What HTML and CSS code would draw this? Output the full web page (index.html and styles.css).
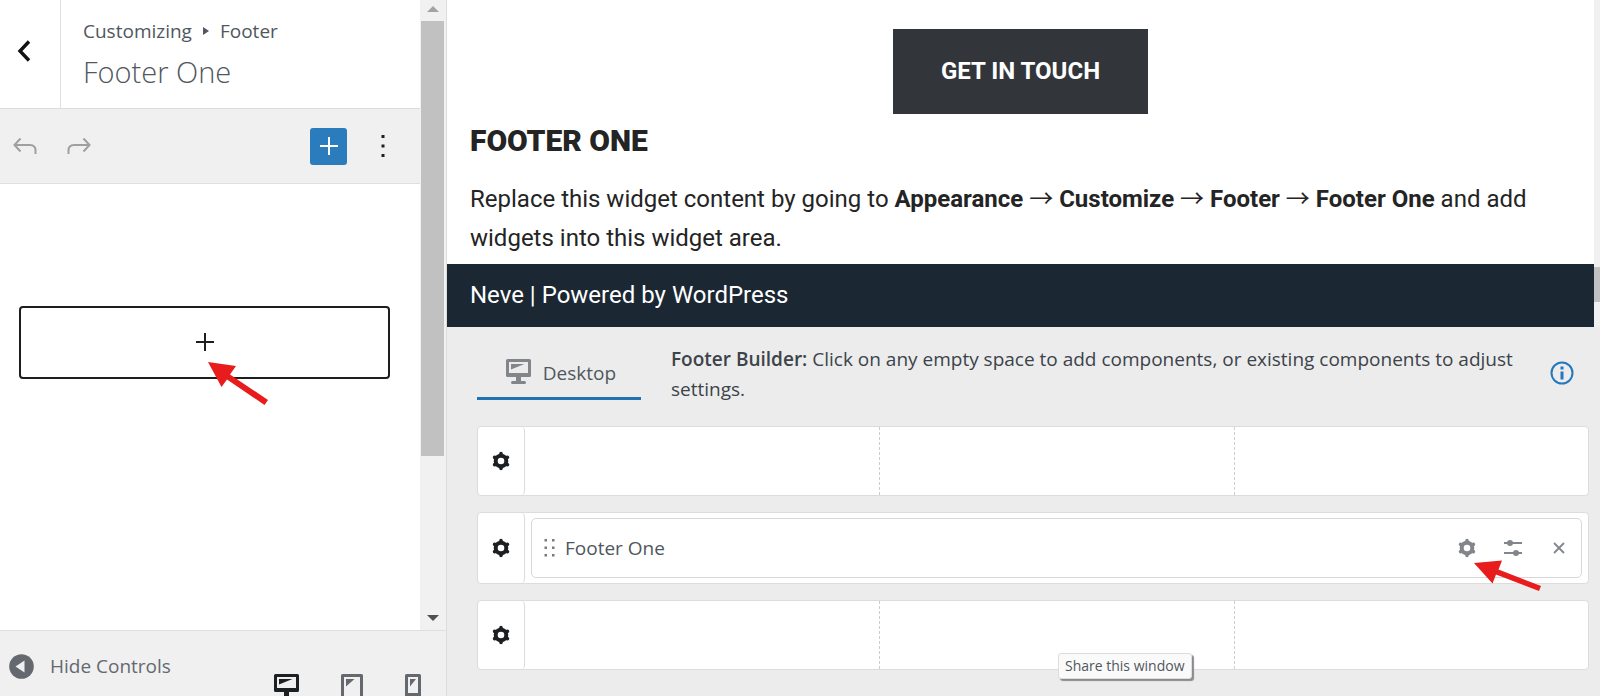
FILE: index.html
```html
<!DOCTYPE html>
<html lang="en">
<head>
<meta charset="utf-8">
<title>Customizing: Footer One</title>
<link rel="stylesheet" href="styles.css">
</head>
<body>
<svg class="defs" aria-hidden="true">
  <symbol id="gear" viewBox="0 0 20 20">
    <g stroke="currentColor" stroke-linecap="round" fill="none">
      <circle cx="10" cy="10" r="5.3" stroke-width="4"/>
      <path stroke-width="3.6" d="M10 4V2.600M10 16v1.400M4.900 7L3.600 6.300M15.100 13l1.300.7M15.100 7l1.300-.7M4.900 13l-1.300.7"/>
    </g>
  </symbol>
  <symbol id="desktop" viewBox="0 0 25 25">
    <path fill="currentColor" fill-rule="evenodd" d="M1.500 0h22A1.500 1.500 0 0 1 25 1.500v15a1.500 1.500 0 0 1-1.500 1.500H15v4h3.500a1.500 1.500 0 0 1 0 3h-12a1.500 1.500 0 0 1 0-3H10v-4H1.500A1.500 1.500 0 0 1 0 16.500v-15A1.500 1.500 0 0 1 1.500 0zM3 3v11h19V3zM5 5h13.500L5 10.500z"/>
  </symbol>
</svg>

<div class="customizer">
  <aside class="sidebar">
    <div class="sidebar-main">
      <div class="panel">
        <header class="panel-header">
          <button class="back" aria-label="Back">
            <svg width="14" height="22" viewBox="0 0 14 22"><path d="M12 1.500L3 11l9 9.500" fill="none" stroke="currentColor" stroke-width="3.400"/></svg>
          </button>
          <div class="titles">
            <p class="crumbs">Customizing <svg class="crumb-mark" width="6" height="8" viewBox="0 0 6 8"><path d="M0 0l6 4-6 4z" fill="currentColor"/></svg> Footer</p>
            <h1 class="title">Footer One</h1>
          </div>
        </header>
        <div class="toolbar">
          <button class="tool" aria-label="Undo">
            <svg width="24" height="18" viewBox="0 0 24 18"><path d="M7.500 1.500L1.500 8l6 6.500M1.500 8H17q5.500 0 5.500 5.500V17" fill="none" stroke="currentColor" stroke-width="2"/></svg>
          </button>
          <button class="tool" aria-label="Redo">
            <svg width="24" height="18" viewBox="0 0 24 18"><path d="M16.500 1.500l6 6.500-6 6.500M22.500 8H7Q1.500 8 1.500 13.500V17" fill="none" stroke="currentColor" stroke-width="2"/></svg>
          </button>
          <button class="inserter" aria-label="Add block">
            <svg width="18" height="18" viewBox="0 0 18 18"><path d="M9 0v18M0 9h18" stroke="currentColor" stroke-width="2"/></svg>
          </button>
          <button class="more" aria-label="More options">
            <svg width="4" height="22" viewBox="0 0 4 22"><path d="M.5 0h3v3h-3zM.5 9.500h3v3h-3zM.5 19h3v3h-3z" fill="currentColor"/></svg>
          </button>
        </div>
        <div class="widgets">
          <button class="appender" aria-label="Add block">
            <svg width="18" height="18" viewBox="0 0 18 18"><path d="M9 0v18M0 9h18" stroke="currentColor" stroke-width="2"/></svg>
          </button>
          <svg class="pointer pointer-appender" width="62" height="46" viewBox="0 0 62 46"><path d="M1 1l28 4-6 8.500L61 39l-3.500 5-37.500-25.500L14.500 26z" fill="#e81c1c"/></svg>
        </div>
      </div>
      <div class="scrollbar">
        <svg class="scroll-up" width="12" height="6" viewBox="0 0 12 6"><path d="M0 6l6-6 6 6z" fill="currentColor"/></svg>
        <div class="track"><div class="thumb"></div></div>
        <svg class="scroll-down" width="12" height="6" viewBox="0 0 12 6"><path d="M0 0h12L6 6z" fill="currentColor"/></svg>
      </div>
    </div>
    <footer class="sidebar-footer">
      <button class="collapse">
        <svg width="25" height="25" viewBox="0 0 25 25"><circle cx="12.500" cy="12.500" r="12.300" fill="currentColor"/><path d="M15.500 6.500v12l-9-6z" fill="#f0f0f0"/></svg>
        <span>Hide Controls</span>
      </button>
      <div class="devices">
        <button class="device device-active" aria-label="Desktop"><svg width="25" height="25"><use href="#desktop"/></svg></button>
        <button class="device" aria-label="Tablet"><svg width="22" height="25" viewBox="0 0 22 25"><path fill="currentColor" fill-rule="evenodd" d="M1.500 0h19A1.500 1.500 0 0 1 22 1.500V25H0V1.500A1.500 1.500 0 0 1 1.500 0zM3 3v19h16V3zM5 5h8.500L5 12.500z"/></svg></button>
        <button class="device" aria-label="Mobile"><svg width="16" height="25" viewBox="0 0 16 25"><path fill="currentColor" fill-rule="evenodd" d="M1.500 0h13A1.500 1.500 0 0 1 16 1.500V25H0V1.500A1.500 1.500 0 0 1 1.500 0zM3 3v16h10V3zM5 5h6l-6 7.500z"/></svg></button>
      </div>
    </footer>
  </aside>

  <main class="main">
    <div class="preview">
      <div class="site">
        <div class="content">
          <a class="cta" href="#">GET IN TOUCH</a>
          <h2 class="widget-title">FOOTER ONE</h2>
          <p class="widget-text">Replace this widget content by going to <strong>Appearance</strong> <span class="arrow">→</span> <strong>Customize</strong> <span class="arrow">→</span> <strong>Footer</strong> <span class="arrow">→</span> <strong>Footer One</strong> and add widgets into this widget area.</p>
        </div>
        <div class="credits">Neve | Powered by WordPress</div>
      </div>
      <div class="site-scroll"><div class="site-thumb"></div></div>
    </div>

    <section class="builder">
      <div class="builder-head">
        <button class="tab"><svg class="tab-icon" width="25" height="25"><use href="#desktop"/></svg><span class="tab-label">Desktop</span></button>
        <p class="hint"><strong>Footer Builder:</strong> Click on any empty space to add components, or existing components to adjust settings.</p>
        <button class="info" aria-label="Information">
          <svg width="24" height="24" viewBox="0 0 24 24"><circle cx="12" cy="12" r="10.500" fill="none" stroke="currentColor" stroke-width="2"/><path d="M10.500 5.500h3v3h-3zM10.500 10.500h3v8h-3z" fill="currentColor"/></svg>
        </button>
      </div>
      <div class="rows">
        <div class="row">
          <button class="row-settings" aria-label="Top row settings"><svg width="20" height="20"><use href="#gear"/></svg></button>
          <div class="cells"><div class="cell"></div><div class="cell"></div><div class="cell"></div></div>
        </div>
        <div class="row">
          <button class="row-settings" aria-label="Main row settings"><svg width="20" height="20"><use href="#gear"/></svg></button>
          <div class="slot">
            <div class="item">
              <svg class="grip" width="12" height="20" viewBox="0 0 12 20"><path d="M.5 1H3v2.500H.5zM8 1h2.500v2.500H8zM.5 8.500H3V11H.5zM8 8.500h2.500V11H8zM.5 16H3v2.500H.5zM8 16h2.500v2.500H8z" fill="currentColor"/></svg>
              <span class="item-name">Footer One</span>
              <div class="actions">
                <button class="action" aria-label="Settings"><svg width="20" height="20"><use href="#gear"/></svg></button>
                <button class="action" aria-label="Options"><svg width="20" height="20" viewBox="0 0 20 20"><path d="M1 5h18M1 15h18" stroke="currentColor" stroke-width="2"/><circle cx="7" cy="5" r="3" fill="currentColor"/><circle cx="13" cy="15" r="3" fill="currentColor"/></svg></button>
                <button class="action" aria-label="Remove"><svg width="20" height="20" viewBox="0 0 20 20"><path d="M5 5l10 10M15 5L5 15" stroke="currentColor" stroke-width="1.800"/></svg></button>
              </div>
              <svg class="pointer pointer-settings" width="70" height="34" viewBox="0 0 70 34"><path d="M1 4l28-2.500-3.500 9L68 27l-2 5-43-16.500-3.500 9z" fill="#e81c1c"/></svg>
            </div>
          </div>
        </div>
        <div class="row">
          <button class="row-settings" aria-label="Bottom row settings"><svg width="20" height="20"><use href="#gear"/></svg></button>
          <div class="cells"><div class="cell"></div><div class="cell"></div><div class="cell"></div></div>
        </div>
      </div>
      <div class="tooltip" role="tooltip">Share this window</div>
    </section>
  </main>
</div>
</body>
</html>
```
FILE: styles.css
```css
* { box-sizing: border-box; }
body {
  margin: 0;
  font-family: "Open Sans", "Noto Sans", sans-serif;
  font-size: 19px;
  color: #50575e;
  background: #ececec;
}
h1, h2, p { margin: 0; }
svg { display: block; flex: none; }
button {
  display: flex;
  align-items: center;
  justify-content: center;
  margin: 0;
  padding: 0;
  border: 0;
  background: none;
  color: inherit;
  font: inherit;
  cursor: pointer;
}
.defs { position: absolute; width: 0; height: 0; }
.customizer { display: flex; height: 100vh; overflow: hidden; }

/* Sidebar */
.sidebar {
  flex: 0 0 447px;
  display: flex;
  flex-direction: column;
  background: #f0f0f0;
  border-right: 1px solid #dcdcdc;
}
.sidebar-main { flex: 1; display: flex; min-height: 0; }
.panel { flex: 1; display: flex; flex-direction: column; background: #fff; }
.panel-header { display: flex; border-bottom: 1px solid #dcdcdc; }
.back { width: 61px; padding: 0 12px 6px 0; border-right: 1px solid #e0e0e0; color: #111; }
.titles { padding: 16px 22px 14px; }
.crumbs { display: flex; align-items: center; gap: 11px; line-height: 30px; }
.title { padding-top: 4px; font-size: 29px; font-weight: 300; line-height: 44px; }
.toolbar {
  display: flex;
  align-items: center;
  gap: 30px;
  height: 75px;
  padding: 0 35px 0 13px;
  background: #f0f0f0;
  border-bottom: 1px solid #dfdfdf;
}
.tool { color: #a0a0a2; }
.inserter { width: 37px; height: 37px; margin-left: auto; border-radius: 3px; background: #2a7cbd; color: #fff; }
.more { margin-left: 4px; color: #1e1e1e; }
.widgets { position: relative; padding: 122px 30px 0 19px; }
.appender { width: 100%; height: 73px; padding-bottom: 2px; border: 2px solid #1e1e1e; border-radius: 4px; color: #1e1e1e; }
.pointer { position: absolute; }
.pointer-appender { left: 207px; top: 177px; }
.scrollbar {
  width: 26px;
  display: flex;
  flex-direction: column;
  align-items: center;
  padding: 6px 2px 9px 1px;
  background: #f1f1f1;
}
.scroll-up { color: #a3a3a3; }
.scroll-down { color: #505050; }
.track { flex: 1; align-self: stretch; padding: 9px 0 6px; }
.thumb { height: 74%; background: #c1c1c1; }
.sidebar-footer {
  display: flex;
  justify-content: space-between;
  height: 66px;
  padding: 0 25px 0 9px;
  border-top: 1px solid #dfdfdf;
  overflow: hidden;
}
.collapse { gap: 16px; align-self: flex-start; height: 70px; color: #646970; }
.devices { display: flex; align-items: flex-start; gap: 42px; padding-top: 43px; }
.device { color: #646970; }
.device-active { color: #1d2023; }

/* Site preview */
.main { flex: 1; display: flex; flex-direction: column; min-width: 0; }
.preview { display: flex; }
.site { flex: 1; background: #fff; color: #242424; font-family: Roboto, "Liberation Sans", sans-serif; font-size: 24px; }
.content { display: flex; flex-direction: column; padding: 29px 23px 6px; }
.cta {
  align-self: center;
  padding: 23px 48px;
  background: #32363b;
  color: #fff;
  font-weight: 700;
  line-height: 39px;
  text-decoration: none;
}
.widget-title { margin-bottom: 12px; font-size: 30px; font-weight: 900; line-height: 54px; }
.widget-text { line-height: 39px; }
.arrow { font-family: "Noto Sans CJK JP", "DejaVu Sans", sans-serif; line-height: 1; }
.credits { padding: 12px 23px; background: #1b2733; color: #fff; line-height: 39px; }
.site-scroll { width: 6px; padding-top: 267px; background: #f1f1f1; }
.site-thumb { height: 35px; background: #c1c1c1; }

/* Footer builder */
.builder { position: relative; flex: 1; padding: 17px 11px 0 30px; background: #ececec; }
.builder-head { display: flex; align-items: flex-start; }
.tab { width: 164px; height: 56px; gap: 12px; padding: 2px 0 0 4px; border-bottom: 3px solid #2271b1; }
.tab-icon { color: #82868b; }
.tab-label { padding-top: 2px; }
.hint { flex: 1; padding: 0 30px; line-height: 30px; color: #3c434a; }
.hint strong { font-weight: 600; }
.info { height: 58px; margin-right: 15px; color: #2478bd; }
.rows { display: grid; gap: 16px; margin-top: 22px; }
.row { display: flex; min-height: 70px; background: #fff; border: 1px solid #dcdcdc; border-radius: 4px; }
.row-settings { width: 47px; border-right: 1px solid #dcdcdc; border-radius: 4px; color: #1d2023; }
.cells { flex: 1; display: grid; grid-template-columns: repeat(3, 1fr); }
.cell + .cell { border-left: 1px dashed #ccc; }
.slot { flex: 1; padding: 5px 6px; }
.item {
  position: relative;
  display: flex;
  align-items: center;
  height: 60px;
  padding: 0 12px;
  border: 1px solid #d8d8d8;
  border-radius: 5px;
}
.grip { color: #777b80; }
.item-name { margin-left: 9px; }
.actions { display: flex; gap: 26px; margin-left: auto; color: #82868b; }
.pointer-settings { right: 38px; top: 40px; }
.tooltip {
  position: absolute;
  left: 611px;
  bottom: 17px;
  padding: 0 6px;
  background: #fafafa;
  border: 1px solid #ddd;
  border-radius: 3px;
  box-shadow: 2px 2px 1px #8a8a90;
  font-size: 14px;
  line-height: 24px;
}
```
